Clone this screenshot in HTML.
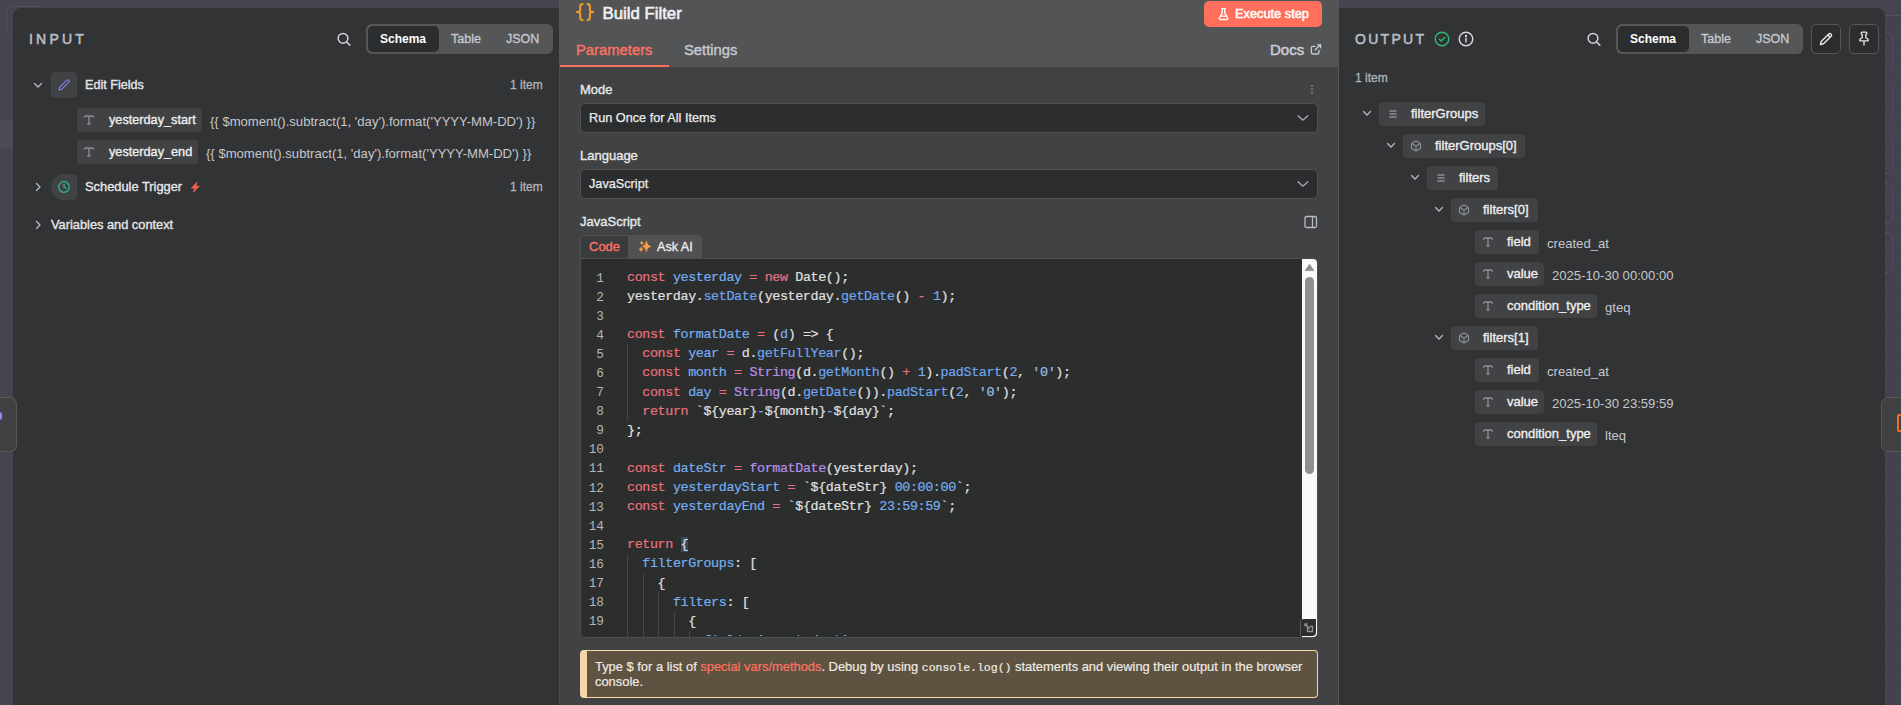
<!DOCTYPE html>
<html><head><meta charset="utf-8">
<style>
*{box-sizing:border-box;margin:0;padding:0}
html,body{width:1901px;height:705px;overflow:hidden}
body{background:#46454f;font-family:"Liberation Sans",sans-serif;position:relative;color:#e8e8e8}
.a{position:absolute}
.nw{white-space:nowrap}
.md{-webkit-text-stroke:0.35px currentColor}
.sb{-webkit-text-stroke:0.35px currentColor}
/* panels */
#lp{left:13px;top:8px;width:546px;height:720px;background:#323335;border-top-left-radius:8px}
#rp{left:1339px;top:8px;width:546px;height:720px;background:#323335;border-top-right-radius:8px}
#cp{left:559px;top:0;width:780px;height:705px;background:#414244;border-left:1px solid #4c4d4f;border-right:1px solid #56575a}
#cph{left:-1px;top:0;width:780px;height:67px;background:#535456}
.label{font-size:14px;letter-spacing:3.2px;color:#b9bcc4;-webkit-text-stroke:0.55px #b9bcc4}
.seg{height:30px;background:#555658;border-radius:6px}
.seg .act{position:absolute;left:2px;top:2px;width:71px;height:26px;background:#2c2d2e;border-radius:5px}
.seg span{position:absolute;top:0;line-height:30px;font-size:12.5px;color:#c7cad1;-webkit-text-stroke:0.3px currentColor}
.seg span.on{color:#fff;font-weight:700;font-size:12px;-webkit-text-stroke:0}
.pill{position:absolute;height:24px;background:#414244;border-radius:4px}
.pill .t{position:absolute;left:0;top:0;line-height:24px;font-size:12px;font-weight:700;color:#f0f0f0;white-space:nowrap}
.val{position:absolute;font-size:13.1px;color:#c5c8cc;white-space:nowrap;line-height:16px}
.chev{position:absolute;width:12px;height:12px}
.code{font-family:"Liberation Mono",monospace;font-size:13.4px;letter-spacing:-0.39px;line-height:19.1px;white-space:pre;color:#e0e0e0;-webkit-text-stroke:0.2px currentColor}
.k{color:#e9707c}.v{color:#75aef0}.f{color:#6da5ef}.p{color:#b690e8}.n{color:#79a9ea}.s{color:#9cc1f2}
.ln{font-family:"Liberation Mono",monospace;font-size:12.75px;line-height:19.1px;color:#b3b5b9;text-align:right;white-space:pre}
</style></head><body>

<!-- canvas decorations -->
<div class="a" style="left:6px;top:6px;width:40px;height:30px;border:1px solid #504f5b;border-radius:6px"></div>
<div class="a" style="left:0;top:120px;width:13px;height:28px;background:#4b4a56"></div>
<div class="a" style="left:1885px;top:15px;width:16px;height:1px;background:#52515c"></div>
<div class="a" style="left:1885px;top:16px;width:16px;height:689px;background:#43424d"></div>
<div class="a" style="left:1885px;top:25px;width:2px;height:1px;background:#51505b"></div><div class="a" style="left:1898px;top:25px;width:2px;height:1px;background:#51505b"></div><div class="a" style="left:1885px;top:38px;width:2px;height:1px;background:#51505b"></div><div class="a" style="left:1898px;top:38px;width:2px;height:1px;background:#51505b"></div><div class="a" style="left:1885px;top:51px;width:2px;height:1px;background:#51505b"></div><div class="a" style="left:1898px;top:51px;width:2px;height:1px;background:#51505b"></div><div class="a" style="left:1885px;top:64px;width:2px;height:1px;background:#51505b"></div><div class="a" style="left:1898px;top:64px;width:2px;height:1px;background:#51505b"></div><div class="a" style="left:1885px;top:77px;width:2px;height:1px;background:#51505b"></div><div class="a" style="left:1898px;top:77px;width:2px;height:1px;background:#51505b"></div><div class="a" style="left:1885px;top:90px;width:2px;height:1px;background:#51505b"></div><div class="a" style="left:1898px;top:90px;width:2px;height:1px;background:#51505b"></div><div class="a" style="left:1885px;top:103px;width:2px;height:1px;background:#51505b"></div><div class="a" style="left:1898px;top:103px;width:2px;height:1px;background:#51505b"></div><div class="a" style="left:1885px;top:116px;width:2px;height:1px;background:#51505b"></div><div class="a" style="left:1898px;top:116px;width:2px;height:1px;background:#51505b"></div><div class="a" style="left:1885px;top:129px;width:2px;height:1px;background:#51505b"></div><div class="a" style="left:1898px;top:129px;width:2px;height:1px;background:#51505b"></div><div class="a" style="left:1885px;top:142px;width:2px;height:1px;background:#51505b"></div><div class="a" style="left:1898px;top:142px;width:2px;height:1px;background:#51505b"></div><div class="a" style="left:1885px;top:155px;width:2px;height:1px;background:#51505b"></div><div class="a" style="left:1898px;top:155px;width:2px;height:1px;background:#51505b"></div><div class="a" style="left:1885px;top:168px;width:2px;height:1px;background:#51505b"></div><div class="a" style="left:1898px;top:168px;width:2px;height:1px;background:#51505b"></div><div class="a" style="left:1885px;top:181px;width:2px;height:1px;background:#51505b"></div><div class="a" style="left:1898px;top:181px;width:2px;height:1px;background:#51505b"></div><div class="a" style="left:1885px;top:194px;width:2px;height:1px;background:#51505b"></div><div class="a" style="left:1898px;top:194px;width:2px;height:1px;background:#51505b"></div><div class="a" style="left:1885px;top:207px;width:2px;height:1px;background:#51505b"></div><div class="a" style="left:1898px;top:207px;width:2px;height:1px;background:#51505b"></div><div class="a" style="left:1885px;top:220px;width:2px;height:1px;background:#51505b"></div><div class="a" style="left:1898px;top:220px;width:2px;height:1px;background:#51505b"></div><div class="a" style="left:1885px;top:233px;width:2px;height:1px;background:#51505b"></div><div class="a" style="left:1898px;top:233px;width:2px;height:1px;background:#51505b"></div><div class="a" style="left:1885px;top:246px;width:2px;height:1px;background:#51505b"></div><div class="a" style="left:1898px;top:246px;width:2px;height:1px;background:#51505b"></div><div class="a" style="left:1885px;top:259px;width:2px;height:1px;background:#51505b"></div><div class="a" style="left:1898px;top:259px;width:2px;height:1px;background:#51505b"></div><div class="a" style="left:1885px;top:272px;width:2px;height:1px;background:#51505b"></div><div class="a" style="left:1898px;top:272px;width:2px;height:1px;background:#51505b"></div><div class="a" style="left:1885px;top:285px;width:2px;height:1px;background:#51505b"></div><div class="a" style="left:1898px;top:285px;width:2px;height:1px;background:#51505b"></div><div class="a" style="left:1885px;top:298px;width:2px;height:1px;background:#51505b"></div><div class="a" style="left:1898px;top:298px;width:2px;height:1px;background:#51505b"></div><div class="a" style="left:1885px;top:311px;width:2px;height:1px;background:#51505b"></div><div class="a" style="left:1898px;top:311px;width:2px;height:1px;background:#51505b"></div><div class="a" style="left:1885px;top:324px;width:2px;height:1px;background:#51505b"></div><div class="a" style="left:1898px;top:324px;width:2px;height:1px;background:#51505b"></div><div class="a" style="left:1885px;top:337px;width:2px;height:1px;background:#51505b"></div><div class="a" style="left:1898px;top:337px;width:2px;height:1px;background:#51505b"></div><div class="a" style="left:1885px;top:350px;width:2px;height:1px;background:#51505b"></div><div class="a" style="left:1898px;top:350px;width:2px;height:1px;background:#51505b"></div><div class="a" style="left:1885px;top:363px;width:2px;height:1px;background:#51505b"></div><div class="a" style="left:1898px;top:363px;width:2px;height:1px;background:#51505b"></div><div class="a" style="left:1885px;top:376px;width:2px;height:1px;background:#51505b"></div><div class="a" style="left:1898px;top:376px;width:2px;height:1px;background:#51505b"></div><div class="a" style="left:1885px;top:389px;width:2px;height:1px;background:#51505b"></div><div class="a" style="left:1898px;top:389px;width:2px;height:1px;background:#51505b"></div><div class="a" style="left:1885px;top:402px;width:2px;height:1px;background:#51505b"></div><div class="a" style="left:1898px;top:402px;width:2px;height:1px;background:#51505b"></div><div class="a" style="left:1885px;top:415px;width:2px;height:1px;background:#51505b"></div><div class="a" style="left:1898px;top:415px;width:2px;height:1px;background:#51505b"></div><div class="a" style="left:1885px;top:428px;width:2px;height:1px;background:#51505b"></div><div class="a" style="left:1898px;top:428px;width:2px;height:1px;background:#51505b"></div><div class="a" style="left:1885px;top:441px;width:2px;height:1px;background:#51505b"></div><div class="a" style="left:1898px;top:441px;width:2px;height:1px;background:#51505b"></div><div class="a" style="left:1885px;top:454px;width:2px;height:1px;background:#51505b"></div><div class="a" style="left:1898px;top:454px;width:2px;height:1px;background:#51505b"></div><div class="a" style="left:1885px;top:467px;width:2px;height:1px;background:#51505b"></div><div class="a" style="left:1898px;top:467px;width:2px;height:1px;background:#51505b"></div><div class="a" style="left:1885px;top:480px;width:2px;height:1px;background:#51505b"></div><div class="a" style="left:1898px;top:480px;width:2px;height:1px;background:#51505b"></div><div class="a" style="left:1885px;top:493px;width:2px;height:1px;background:#51505b"></div><div class="a" style="left:1898px;top:493px;width:2px;height:1px;background:#51505b"></div><div class="a" style="left:1885px;top:506px;width:2px;height:1px;background:#51505b"></div><div class="a" style="left:1898px;top:506px;width:2px;height:1px;background:#51505b"></div><div class="a" style="left:1885px;top:519px;width:2px;height:1px;background:#51505b"></div><div class="a" style="left:1898px;top:519px;width:2px;height:1px;background:#51505b"></div><div class="a" style="left:1885px;top:532px;width:2px;height:1px;background:#51505b"></div><div class="a" style="left:1898px;top:532px;width:2px;height:1px;background:#51505b"></div><div class="a" style="left:1885px;top:545px;width:2px;height:1px;background:#51505b"></div><div class="a" style="left:1898px;top:545px;width:2px;height:1px;background:#51505b"></div><div class="a" style="left:1885px;top:558px;width:2px;height:1px;background:#51505b"></div><div class="a" style="left:1898px;top:558px;width:2px;height:1px;background:#51505b"></div><div class="a" style="left:1885px;top:571px;width:2px;height:1px;background:#51505b"></div><div class="a" style="left:1898px;top:571px;width:2px;height:1px;background:#51505b"></div><div class="a" style="left:1885px;top:584px;width:2px;height:1px;background:#51505b"></div><div class="a" style="left:1898px;top:584px;width:2px;height:1px;background:#51505b"></div><div class="a" style="left:1885px;top:597px;width:2px;height:1px;background:#51505b"></div><div class="a" style="left:1898px;top:597px;width:2px;height:1px;background:#51505b"></div><div class="a" style="left:1885px;top:610px;width:2px;height:1px;background:#51505b"></div><div class="a" style="left:1898px;top:610px;width:2px;height:1px;background:#51505b"></div><div class="a" style="left:1885px;top:623px;width:2px;height:1px;background:#51505b"></div><div class="a" style="left:1898px;top:623px;width:2px;height:1px;background:#51505b"></div><div class="a" style="left:1885px;top:636px;width:2px;height:1px;background:#51505b"></div><div class="a" style="left:1898px;top:636px;width:2px;height:1px;background:#51505b"></div><div class="a" style="left:1885px;top:649px;width:2px;height:1px;background:#51505b"></div><div class="a" style="left:1898px;top:649px;width:2px;height:1px;background:#51505b"></div><div class="a" style="left:1885px;top:662px;width:2px;height:1px;background:#51505b"></div><div class="a" style="left:1898px;top:662px;width:2px;height:1px;background:#51505b"></div><div class="a" style="left:1885px;top:675px;width:2px;height:1px;background:#51505b"></div><div class="a" style="left:1898px;top:675px;width:2px;height:1px;background:#51505b"></div><div class="a" style="left:1885px;top:688px;width:2px;height:1px;background:#51505b"></div><div class="a" style="left:1898px;top:688px;width:2px;height:1px;background:#51505b"></div><div class="a" style="left:1885px;top:701px;width:2px;height:1px;background:#51505b"></div><div class="a" style="left:1898px;top:701px;width:2px;height:1px;background:#51505b"></div>

<div class="a" style="left:1850px;top:32px;width:43px;height:42px;border:1px solid #4f4e5a;border-radius:6px"></div>
<div class="a" style="left:1850px;top:82px;width:43px;height:42px;border:1px solid #4f4e5a;border-radius:6px"></div>
<div class="a" style="left:1850px;top:132px;width:43px;height:42px;border:1px solid #4f4e5a;border-radius:6px"></div>
<div class="a" style="left:1850px;top:182px;width:43px;height:42px;border:1px solid #4f4e5a;border-radius:6px"></div>
<div class="a" style="left:1850px;top:232px;width:43px;height:42px;border:1px solid #4f4e5a;border-radius:6px"></div>


<!-- LEFT PANEL -->
<div id="lp" class="a">
</div>

<!-- CENTER PANEL -->
<div id="cp" class="a">
  <div id="cph" class="a"></div>
</div>


<!-- left panel content -->
<div class="a label nw" style="left:29px;top:31px;line-height:16px">INPUT</div>
<svg class="a" style="left:336px;top:31px" width="16" height="16" viewBox="0 0 16 16" fill="none" stroke="#d0d2d6" stroke-width="1.5" stroke-linecap="round"><circle cx="7" cy="7.3" r="4.9"/><path d="M10.7 11 L13.8 14.1"/></svg>
<div class="a seg" style="left:366px;top:24px;width:187px">
  <div class="act"></div>
  <span class="on" style="left:14px">Schema</span>
  <span style="left:85px">Table</span>
  <span style="left:140px">JSON</span>
</div>

<svg class="a" style="left:32px;top:79px" width="12" height="12" viewBox="0 0 12 12" fill="none" stroke="#b6bac3" stroke-width="1.3" stroke-linecap="round" stroke-linejoin="round"><path d="M2.5 4.5 L6 8 L9.5 4.5"/></svg>
<div class="a" style="left:51px;top:72px;width:26px;height:26px;background:#414244;border-radius:4px"></div>
<svg class="a" style="left:56px;top:77px" width="16" height="16" viewBox="0 0 16 16" fill="none" stroke="#7f81f3" stroke-width="1.1" stroke-linejoin="round"><path d="M3 13 L3.6 10.4 L10.8 3.2 Q11.8 2.2 12.8 3.2 Q13.8 4.2 12.8 5.2 L5.6 12.4 Z"/></svg>
<div class="a nw md" style="left:85px;top:77px;line-height:16px;font-size:12.6px;color:#e6e7e9">Edit Fields</div>
<div class="a nw" style="left:510px;top:77px;line-height:16px;font-size:12px;color:#aeb3bd;-webkit-text-stroke:0.3px #aeb3bd">1 item</div>

<div class="pill" style="left:77px;top:108px;width:125px"></div>
<svg class="a" style="left:83px;top:114px" width="12" height="12" viewBox="0 0 12 12" fill="none" stroke="#8d9098" stroke-width="1.3"><path d="M1.3 3.6 Q1.6 2 3.2 2 L8.8 2 Q10.4 2 10.7 3.6 M6 2 L6 10 M4.3 10 L7.7 10"/></svg>
<div class="a nw sb" style="left:109px;top:112px;line-height:16px;font-size:12.7px;color:#eeeff0">yesterday_start</div>
<div class="a val" style="left:210px;top:114px">{{ $moment().subtract(1, 'day').format('YYYY-MM-DD') }}</div>

<div class="pill" style="left:77px;top:140px;width:121px"></div>
<svg class="a" style="left:83px;top:146px" width="12" height="12" viewBox="0 0 12 12" fill="none" stroke="#8d9098" stroke-width="1.3"><path d="M1.3 3.6 Q1.6 2 3.2 2 L8.8 2 Q10.4 2 10.7 3.6 M6 2 L6 10 M4.3 10 L7.7 10"/></svg>
<div class="a nw sb" style="left:109px;top:144px;line-height:16px;font-size:12.7px;color:#eeeff0">yesterday_end</div>
<div class="a val" style="left:206px;top:146px">{{ $moment().subtract(1, 'day').format('YYYY-MM-DD') }}</div>

<svg class="a" style="left:32px;top:181px" width="12" height="12" viewBox="0 0 12 12" fill="none" stroke="#b6bac3" stroke-width="1.3" stroke-linecap="round" stroke-linejoin="round"><path d="M4.5 2.5 L8 6 L4.5 9.5"/></svg>
<div class="a" style="left:51px;top:174px;width:26px;height:26px;background:#414244;border-radius:13px 4px 4px 13px"></div>
<svg class="a" style="left:57px;top:180px" width="14" height="14" viewBox="0 0 14 14" fill="none" stroke="#30b893" stroke-width="1.25" stroke-linecap="round"><circle cx="7" cy="7" r="5.3"/><path d="M7 4 L7 7 L9 8.3"/></svg>
<div class="a nw md" style="left:85px;top:179px;line-height:16px;font-size:12.85px;color:#e6e7e9">Schedule Trigger</div>
<svg class="a" style="left:189px;top:180px" width="12" height="13" viewBox="0 0 12 13"><path d="M8 2.3 L2.4 8.1 L5.9 8.1 L4.5 12 L10.2 6.2 L6.8 6.2 Z" fill="#f0604e" stroke="#f0604e" stroke-width="0.9" stroke-linejoin="round"/></svg>
<div class="a nw" style="left:510px;top:179px;line-height:16px;font-size:12px;color:#aeb3bd;-webkit-text-stroke:0.3px #aeb3bd">1 item</div>

<svg class="a" style="left:32px;top:219px" width="12" height="12" viewBox="0 0 12 12" fill="none" stroke="#b6bac3" stroke-width="1.3" stroke-linecap="round" stroke-linejoin="round"><path d="M4.5 2.5 L8 6 L4.5 9.5"/></svg>
<div class="a nw md" style="left:51px;top:217px;line-height:16px;font-size:12.8px;color:#e6e7e9">Variables and context</div>

<!-- center content -->
<svg class="a" style="left:575px;top:2px" width="20" height="20" viewBox="0 0 20 20" fill="none" stroke="#f39c26" stroke-width="2" stroke-linecap="round" stroke-linejoin="round"><path d="M7.6 1.9 Q5.2 1.9 5.2 4.5 L5.2 8.2 Q5.2 10 1.9 10 Q5.2 10 5.2 11.8 L5.2 15.5 Q5.2 18.1 7.6 18.1 M12.5 1.9 Q14.9 1.9 14.9 4.5 L14.9 8.2 Q14.9 10 18.2 10 Q14.9 10 14.9 11.8 L14.9 15.5 Q14.9 18.1 12.5 18.1"/></svg>
<div class="a nw" style="left:602.5px;top:3.5px;line-height:20px;font-size:16.8px;color:#eff0f2;-webkit-text-stroke:0.6px #eff0f2">Build Filter</div>
<div class="a" style="left:1204px;top:1px;width:118px;height:26px;background:#ff6f5c;border-radius:5px"></div>
<svg class="a" style="left:1216.5px;top:6.5px" width="13" height="14" viewBox="0 0 13 14" fill="none" stroke="#fff" stroke-width="1.3" stroke-linejoin="round" stroke-linecap="round"><path d="M4.6 1.6 L8.4 1.6 M5.3 1.6 L5.3 5.6 L2.4 11 Q1.9 12.5 3.4 12.5 L9.6 12.5 Q11.1 12.5 10.6 11 L7.7 5.6 L7.7 1.6 M3.4 9.2 L9.6 9.2"/></svg>
<div class="a nw" style="left:1235px;top:6px;line-height:16px;font-size:12.8px;color:#fff;-webkit-text-stroke:0.5px #fff">Execute step</div>

<div class="a nw md" style="left:576px;top:42px;line-height:16px;font-size:14.8px;color:#ff7262">Parameters</div>
<div class="a" style="left:560px;top:65px;width:109px;height:2px;background:#ff6f5c"></div>
<div class="a nw md" style="left:684px;top:42px;line-height:16px;font-size:14.8px;color:#c8cbd2">Settings</div>
<div class="a nw" style="left:1270px;top:42px;line-height:16px;font-size:15px;color:#c9cdd6;-webkit-text-stroke:0.5px #c9cdd6">Docs</div>
<svg class="a" style="left:1310px;top:44px" width="12" height="11" viewBox="0 0 12 11" fill="none" stroke="#c9cdd6" stroke-width="1.3" stroke-linecap="round" stroke-linejoin="round"><path d="M5 2.3 L3 2.3 Q1.3 2.3 1.3 4 L1.3 8.3 Q1.3 10 3 10 L7.3 10 Q9 10 9 8.3 L9 6.3 M5.2 5.8 L10.6 0.8 M7.6 0.8 L10.6 0.8 L10.6 3.8"/></svg>

<div class="a nw md" style="left:580px;top:82px;line-height:16px;font-size:13px;color:#e8e9eb">Mode</div>
<div class="a" style="left:1311px;top:85px;width:2px;height:2px;background:#6d6f73;box-shadow:0 3.5px 0 #6d6f73,0 7px 0 #6d6f73"></div>
<div class="a" style="left:580px;top:103px;width:738px;height:30px;background:#2c2d2e;border:1px solid #505153;border-radius:5px"></div>
<div class="a nw md" style="left:589px;top:110px;line-height:16px;font-size:12.7px;color:#ebecee;-webkit-text-stroke-width:0.25px">Run Once for All Items</div>
<svg class="a" style="left:1296px;top:111.5px" width="13" height="13" viewBox="0 0 13 13" fill="none" stroke="#aeb2bc" stroke-width="1.2" stroke-linecap="round"><path d="M2 3.7 L6.9 8.3 L11.8 3.7"/></svg>

<div class="a nw md" style="left:580px;top:148px;line-height:16px;font-size:13px;color:#e8e9eb">Language</div>
<div class="a" style="left:580px;top:169px;width:738px;height:30px;background:#2c2d2e;border:1px solid #505153;border-radius:5px"></div>
<div class="a nw md" style="left:589px;top:176px;line-height:16px;font-size:12.7px;color:#ebecee;-webkit-text-stroke-width:0.25px">JavaScript</div>
<svg class="a" style="left:1296px;top:177.5px" width="13" height="13" viewBox="0 0 13 13" fill="none" stroke="#aeb2bc" stroke-width="1.2" stroke-linecap="round"><path d="M2 3.7 L6.9 8.3 L11.8 3.7"/></svg>

<div class="a nw md" style="left:580px;top:214px;line-height:16px;font-size:13px;color:#e8e9eb">JavaScript</div>
<svg class="a" style="left:1304px;top:215px" width="14" height="14" viewBox="0 0 14 14" fill="none" stroke="#b9bcc2" stroke-width="1.3"><rect x="1" y="1.5" width="11.5" height="11" rx="1.5"/><path d="M8.5 1.5 L8.5 12.5"/></svg>

<div class="a" style="left:580px;top:235px;width:122px;height:24px;background:#505153;border-radius:5px 5px 0 0"></div>
<div class="a" style="left:581px;top:236px;width:47px;height:23px;background:#3a3b3d;border-radius:4px 0 0 0"></div>
<div class="a nw md" style="left:589px;top:239px;line-height:16px;font-size:13px;color:#ff7262">Code</div>
<svg class="a" style="left:638px;top:239px" width="16" height="15" viewBox="0 0 16 15"><defs><linearGradient id="sg" x1="1" y1="0" x2="0" y2="1"><stop offset="0" stop-color="#ffd040"/><stop offset="1" stop-color="#ff6f4a"/></linearGradient></defs><g fill="url(#sg)" stroke="url(#sg)" stroke-width="0.5" stroke-linejoin="round"><path d="M8.4 1.8 Q9 6.9 12.8 7.5 Q9 8.1 8.4 13.2 Q7.8 8.1 4 7.5 Q7.8 6.9 8.4 1.8 Z"/><path d="M3.8 2.2 Q4.1 3.7 5.6 4 Q4.1 4.3 3.8 5.8 Q3.5 4.3 2 4 Q3.5 3.7 3.8 2.2 Z"/><path d="M3 8.2 Q3.4 10 5.2 10.4 Q3.4 10.8 3 12.6 Q2.6 10.8 0.8 10.4 Q2.6 10 3 8.2 Z"/></g></svg>
<div class="a nw md" style="left:657px;top:239px;line-height:16px;font-size:12.6px;color:#e8e9eb">Ask AI</div>

<div class="a" style="left:580px;top:258px;width:738px;height:380px;background:#2c2d2d;border:1px solid #4d4e50;border-radius:0 5px 5px 5px;overflow:hidden">
</div>

<div class="a" style="left:581px;top:259px;width:736px;height:377px;overflow:hidden"><div class="a ln" style="left:0px;top:9.5px;width:23px">1
2
3
4
5
6
7
8
9
10
11
12
13
14
15
16
17
18
19</div>
<div class="a code" style="left:46px;top:9px"><span class="k">const</span> <span class="v">yesterday</span> <span class="k">=</span> <span class="k">new</span> Date();
yesterday.<span class="f">setDate</span>(yesterday.<span class="f">getDate</span>() <span class="k">-</span> <span class="n">1</span>);

<span class="k">const</span> <span class="v">formatDate</span> <span class="k">=</span> (<span class="v">d</span>) =&gt; {
  <span class="k">const</span> <span class="v">year</span> <span class="k">=</span> d.<span class="f">getFullYear</span>();
  <span class="k">const</span> <span class="v">month</span> <span class="k">=</span> <span class="p">String</span>(d.<span class="f">getMonth</span>() <span class="k">+</span> <span class="n">1</span>).<span class="f">padStart</span>(<span class="n">2</span>, <span class="s">'0'</span>);
  <span class="k">const</span> <span class="v">day</span> <span class="k">=</span> <span class="p">String</span>(d.<span class="f">getDate</span>()).<span class="f">padStart</span>(<span class="n">2</span>, <span class="s">'0'</span>);
  <span class="k">return</span> `${year}<span class="v">-</span>${month}<span class="v">-</span>${day}`;
};

<span class="k">const</span> <span class="v">dateStr</span> <span class="k">=</span> <span class="p">formatDate</span>(yesterday);
<span class="k">const</span> <span class="v">yesterdayStart</span> <span class="k">=</span> `${dateStr}<span class="v"> 00:00:00</span>`;
<span class="k">const</span> <span class="v">yesterdayEnd</span> <span class="k">=</span> `${dateStr}<span class="v"> 23:59:59</span>`;

<span class="k">return</span> <span style="background:#3a4a5e">{</span>
  <span class="v">filterGroups</span>: [
    {
      <span class="v">filters</span>: [
        {
          <span class="v">field</span>: <span class="s">'created_at'</span>,</div>
</div><!-- indent guides -->
<div class="a" style="left:627px;top:344px;width:1px;height:76px;background:#45474a"></div>
<div class="a" style="left:627px;top:555px;width:1px;height:82px;background:#45474a"></div>
<div class="a" style="left:643px;top:574px;width:1px;height:63px;background:#45474a"></div>
<div class="a" style="left:658px;top:593px;width:1px;height:44px;background:#45474a"></div>
<div class="a" style="left:674px;top:612px;width:1px;height:25px;background:#45474a"></div>
<div class="a" style="left:689px;top:631px;width:1px;height:6px;background:#45474a"></div>
<!-- scrollbar -->
<div class="a" style="left:1302px;top:259px;width:15px;height:378px;background:#fafafa;border-radius:0 4px 4px 0"></div>
<svg class="a" style="left:1302px;top:262px" width="15" height="10" viewBox="0 0 15 10"><path d="M3.2 8.6 L7.5 2.3 L11.8 8.6 Z" fill="#8f8f8f" stroke="#8f8f8f" stroke-width="0.8" stroke-linejoin="round"/></svg>
<div class="a" style="left:1305px;top:277px;width:9px;height:197px;background:#8f8f8f;border-radius:4.5px"></div>
<div class="a" style="left:1300px;top:619px;width:16px;height:17px;background:#2c2d2d;border-left:1px solid #5a5b5d;border-radius:4px 0 4px 0"></div>
<svg class="a" style="left:1301px;top:620px" width="15" height="15" viewBox="0 0 15 15" fill="none" stroke="#8d9095" stroke-width="1.3" stroke-linecap="round"><path d="M4 4 L8.5 8.5 M4 4 L4 6 M4 4 L6 4 M6.5 6.5 L6.5 11.5 L11.5 11.5 L11.5 6.5 L9 6.5" /></svg>
<!-- callout -->
<div class="a" style="left:580px;top:650px;width:738px;height:48px;background:#5e5241;border:1px solid #f5d7a6;border-left:7px solid #f5d7a6;border-radius:4px"></div>
<div class="a" style="left:595px;top:659px;width:715px;line-height:15px;font-size:12.9px;color:#eeeae2;-webkit-text-stroke:0.2px currentColor">Type $ for a list of <span style="color:#ff7262">special vars/methods</span>. Debug by using <span style="font-family:'Liberation Mono';font-size:11.5px;line-height:10px">console.log()</span> statements and viewing their output in the browser console.</div>
<!-- RIGHT PANEL -->
<div id="rp" class="a">
</div>


<!-- right panel content -->
<div class="a label nw" style="left:1355px;top:31px;line-height:16px;letter-spacing:2.3px">OUTPUT</div>
<svg class="a" style="left:1434px;top:31px" width="16" height="16" viewBox="0 0 16 16" fill="none" stroke="#2fb873" stroke-width="1.4" stroke-linecap="round" stroke-linejoin="round"><circle cx="8" cy="8" r="6.8"/><path d="M5.3 8.2 L7.2 9.9 L10.7 6.4"/></svg>
<svg class="a" style="left:1458px;top:31px" width="16" height="16" viewBox="0 0 16 16" fill="none" stroke="#d5d7db" stroke-width="1.4" stroke-linecap="round"><circle cx="8" cy="8" r="6.8"/><path d="M8 7.3 L8 11"/><circle cx="8" cy="4.9" r="0.5" fill="#d5d7db"/></svg>
<svg class="a" style="left:1586px;top:31px" width="16" height="16" viewBox="0 0 16 16" fill="none" stroke="#d0d2d6" stroke-width="1.5" stroke-linecap="round"><circle cx="7" cy="7.3" r="4.9"/><path d="M10.7 11 L13.8 14.1"/></svg>
<div class="a seg" style="left:1616px;top:24px;width:187px">
  <div class="act"></div>
  <span class="on" style="left:14px">Schema</span>
  <span style="left:85px">Table</span>
  <span style="left:140px">JSON</span>
</div>
<div class="a" style="left:1811px;top:24px;width:30px;height:30px;border:1px solid #56575a;border-radius:5px;background:#2c2d2e"></div>
<svg class="a" style="left:1818px;top:31px" width="16" height="16" viewBox="0 0 16 16" fill="none" stroke="#e6e7e9" stroke-width="1.4" stroke-linejoin="round"><path d="M2.5 13.5 L3.2 10.5 L10.8 2.9 Q11.8 1.9 12.8 2.9 L13.1 3.2 Q14.1 4.2 13.1 5.2 L5.5 12.8 Z M9.8 3.9 L12.1 6.2"/></svg>
<div class="a" style="left:1849px;top:24px;width:30px;height:30px;border:1px solid #56575a;border-radius:5px;background:#2c2d2e"></div>
<svg class="a" style="left:1856px;top:31px" width="16" height="16" viewBox="0 0 16 16" fill="none" stroke="#e6e7e9" stroke-width="1.3" stroke-linejoin="round" stroke-linecap="round"><path d="M5.2 2.3 Q5.2 1.2 6.3 1.2 L9.7 1.2 Q10.8 1.2 10.8 2.3 Q10.8 3.3 9.8 3.6 L9.8 6.6 Q12.3 7.8 12.3 9 Q12.3 9.9 11.5 9.9 L4.5 9.9 Q3.7 9.9 3.7 9 Q3.7 7.8 6.2 6.6 L6.2 3.6 Q5.2 3.3 5.2 2.3 Z M8 10 L8 14"/></svg>
<div class="a nw" style="left:1355px;top:70px;line-height:16px;font-size:12px;color:#aeb3bd;-webkit-text-stroke:0.3px #aeb3bd">1 item</div>
<svg class="a" style="left:1361px;top:107px" width="12" height="12" viewBox="0 0 12 12" fill="none" stroke="#b6bac3" stroke-width="1.3" stroke-linecap="round" stroke-linejoin="round"><path d="M2.5 4.5 L6 8 L9.5 4.5"/></svg><div class="pill" style="left:1379px;top:102px;width:106px"></div><svg class="a" style="left:1387px;top:108px" width="12" height="12" viewBox="0 0 12 12" fill="none" stroke="#8d9098" stroke-width="1.3"><path d="M2.5 3 L9.5 3 M2.5 6 L9.5 6 M2.5 9 L9.5 9"/></svg><div class="a nw" style="left:1411px;top:106px;line-height:16px;font-size:13px;color:#eeeff0;-webkit-text-stroke:0.35px #eeeff0">filterGroups</div><svg class="a" style="left:1385px;top:139px" width="12" height="12" viewBox="0 0 12 12" fill="none" stroke="#b6bac3" stroke-width="1.3" stroke-linecap="round" stroke-linejoin="round"><path d="M2.5 4.5 L6 8 L9.5 4.5"/></svg><div class="pill" style="left:1403px;top:134px;width:122px"></div><svg class="a" style="left:1410px;top:140px" width="12" height="12" viewBox="0 0 12 12" fill="none" stroke="#8d9098" stroke-width="1.1" stroke-linejoin="round"><path d="M6 1 L10.5 3.5 L10.5 8.5 L6 11 L1.5 8.5 L1.5 3.5 Z M1.5 3.5 L6 6 L10.5 3.5 M6 6 L6 11"/></svg><div class="a nw" style="left:1435px;top:138px;line-height:16px;font-size:13px;color:#eeeff0;-webkit-text-stroke:0.35px #eeeff0">filterGroups[0]</div><svg class="a" style="left:1409px;top:171px" width="12" height="12" viewBox="0 0 12 12" fill="none" stroke="#b6bac3" stroke-width="1.3" stroke-linecap="round" stroke-linejoin="round"><path d="M2.5 4.5 L6 8 L9.5 4.5"/></svg><div class="pill" style="left:1427px;top:166px;width:71px"></div><svg class="a" style="left:1435px;top:172px" width="12" height="12" viewBox="0 0 12 12" fill="none" stroke="#8d9098" stroke-width="1.3"><path d="M2.5 3 L9.5 3 M2.5 6 L9.5 6 M2.5 9 L9.5 9"/></svg><div class="a nw" style="left:1459px;top:170px;line-height:16px;font-size:13px;color:#eeeff0;-webkit-text-stroke:0.35px #eeeff0">filters</div><svg class="a" style="left:1433px;top:203px" width="12" height="12" viewBox="0 0 12 12" fill="none" stroke="#b6bac3" stroke-width="1.3" stroke-linecap="round" stroke-linejoin="round"><path d="M2.5 4.5 L6 8 L9.5 4.5"/></svg><div class="pill" style="left:1451px;top:198px;width:87px"></div><svg class="a" style="left:1458px;top:204px" width="12" height="12" viewBox="0 0 12 12" fill="none" stroke="#8d9098" stroke-width="1.1" stroke-linejoin="round"><path d="M6 1 L10.5 3.5 L10.5 8.5 L6 11 L1.5 8.5 L1.5 3.5 Z M1.5 3.5 L6 6 L10.5 3.5 M6 6 L6 11"/></svg><div class="a nw" style="left:1483px;top:202px;line-height:16px;font-size:13px;color:#eeeff0;-webkit-text-stroke:0.35px #eeeff0">filters[0]</div><div class="pill" style="left:1475px;top:230px;width:64px"></div><svg class="a" style="left:1482px;top:236px" width="12" height="12" viewBox="0 0 12 12" fill="none" stroke="#8d9098" stroke-width="1.3"><path d="M1.3 3.6 Q1.6 2 3.2 2 L8.8 2 Q10.4 2 10.7 3.6 M6 2 L6 10 M4.3 10 L7.7 10"/></svg><div class="a nw" style="left:1507px;top:234px;line-height:16px;font-size:13px;color:#eeeff0;-webkit-text-stroke:0.35px #eeeff0">field</div><div class="a val" style="left:1547px;top:236px">created_at</div><div class="pill" style="left:1475px;top:262px;width:69px"></div><svg class="a" style="left:1482px;top:268px" width="12" height="12" viewBox="0 0 12 12" fill="none" stroke="#8d9098" stroke-width="1.3"><path d="M1.3 3.6 Q1.6 2 3.2 2 L8.8 2 Q10.4 2 10.7 3.6 M6 2 L6 10 M4.3 10 L7.7 10"/></svg><div class="a nw" style="left:1507px;top:266px;line-height:16px;font-size:13px;color:#eeeff0;-webkit-text-stroke:0.35px #eeeff0">value</div><div class="a val" style="left:1552px;top:268px">2025-10-30 00:00:00</div><div class="pill" style="left:1475px;top:294px;width:122px"></div><svg class="a" style="left:1482px;top:300px" width="12" height="12" viewBox="0 0 12 12" fill="none" stroke="#8d9098" stroke-width="1.3"><path d="M1.3 3.6 Q1.6 2 3.2 2 L8.8 2 Q10.4 2 10.7 3.6 M6 2 L6 10 M4.3 10 L7.7 10"/></svg><div class="a nw" style="left:1507px;top:298px;line-height:16px;font-size:13px;color:#eeeff0;-webkit-text-stroke:0.35px #eeeff0">condition_type</div><div class="a val" style="left:1605px;top:300px">gteq</div><svg class="a" style="left:1433px;top:331px" width="12" height="12" viewBox="0 0 12 12" fill="none" stroke="#b6bac3" stroke-width="1.3" stroke-linecap="round" stroke-linejoin="round"><path d="M2.5 4.5 L6 8 L9.5 4.5"/></svg><div class="pill" style="left:1451px;top:326px;width:87px"></div><svg class="a" style="left:1458px;top:332px" width="12" height="12" viewBox="0 0 12 12" fill="none" stroke="#8d9098" stroke-width="1.1" stroke-linejoin="round"><path d="M6 1 L10.5 3.5 L10.5 8.5 L6 11 L1.5 8.5 L1.5 3.5 Z M1.5 3.5 L6 6 L10.5 3.5 M6 6 L6 11"/></svg><div class="a nw" style="left:1483px;top:330px;line-height:16px;font-size:13px;color:#eeeff0;-webkit-text-stroke:0.35px #eeeff0">filters[1]</div><div class="pill" style="left:1475px;top:358px;width:64px"></div><svg class="a" style="left:1482px;top:364px" width="12" height="12" viewBox="0 0 12 12" fill="none" stroke="#8d9098" stroke-width="1.3"><path d="M1.3 3.6 Q1.6 2 3.2 2 L8.8 2 Q10.4 2 10.7 3.6 M6 2 L6 10 M4.3 10 L7.7 10"/></svg><div class="a nw" style="left:1507px;top:362px;line-height:16px;font-size:13px;color:#eeeff0;-webkit-text-stroke:0.35px #eeeff0">field</div><div class="a val" style="left:1547px;top:364px">created_at</div><div class="pill" style="left:1475px;top:390px;width:69px"></div><svg class="a" style="left:1482px;top:396px" width="12" height="12" viewBox="0 0 12 12" fill="none" stroke="#8d9098" stroke-width="1.3"><path d="M1.3 3.6 Q1.6 2 3.2 2 L8.8 2 Q10.4 2 10.7 3.6 M6 2 L6 10 M4.3 10 L7.7 10"/></svg><div class="a nw" style="left:1507px;top:394px;line-height:16px;font-size:13px;color:#eeeff0;-webkit-text-stroke:0.35px #eeeff0">value</div><div class="a val" style="left:1552px;top:396px">2025-10-30 23:59:59</div><div class="pill" style="left:1475px;top:422px;width:122px"></div><svg class="a" style="left:1482px;top:428px" width="12" height="12" viewBox="0 0 12 12" fill="none" stroke="#8d9098" stroke-width="1.3"><path d="M1.3 3.6 Q1.6 2 3.2 2 L8.8 2 Q10.4 2 10.7 3.6 M6 2 L6 10 M4.3 10 L7.7 10"/></svg><div class="a nw" style="left:1507px;top:426px;line-height:16px;font-size:13px;color:#eeeff0;-webkit-text-stroke:0.35px #eeeff0">condition_type</div><div class="a val" style="left:1605px;top:428px">lteq</div>
<div class="a" style="left:0;top:397px;width:17px;height:55px;background:#414143;border:1px solid #58585a;border-left:none;border-radius:0 7px 7px 0"></div>
<div class="a" style="left:-4px;top:412px;width:6px;height:8px;background:#8f8ffb;border-radius:3px"></div>
<div class="a" style="left:1881px;top:397px;width:30px;height:55px;background:#414143;border:1px solid #58585a;border-radius:7px"></div>
<div class="a" style="left:1897px;top:414px;width:6px;height:18px;border:2px solid #f26a2a;border-radius:2px"></div>

</body></html>
